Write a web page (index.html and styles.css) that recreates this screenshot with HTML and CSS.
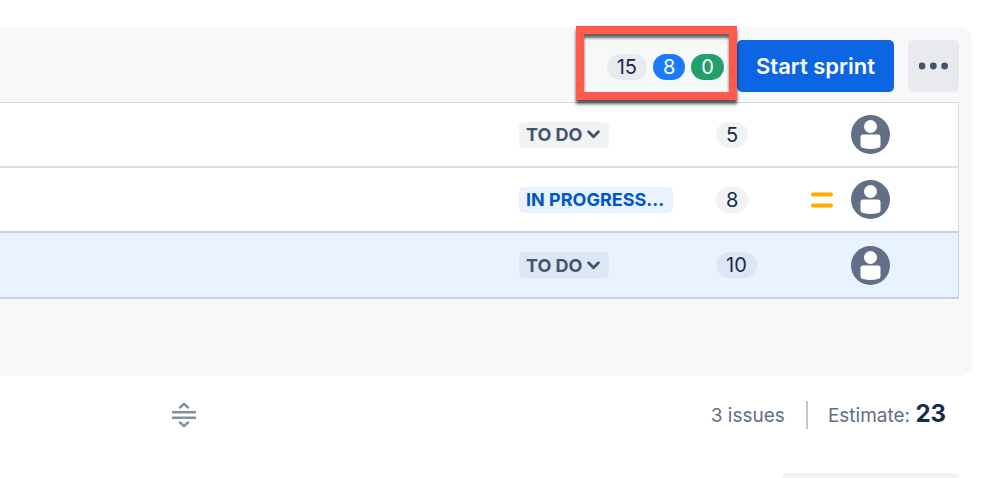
FILE: index.html
```html
<!DOCTYPE html>
<html lang="en">
<head>
<meta charset="utf-8">
<title>Sprint</title>
<link rel="stylesheet" href="styles.css">
</head>
<body>
<svg width="0" height="0" class="symbols" aria-hidden="true">
  <symbol id="person" viewBox="0 0 39 39">
    <circle cx="19.5" cy="19.5" r="19.5" fill="#626f86"/>
    <circle cx="19.5" cy="11.5" r="6.5" fill="#fff"/>
    <path d="M12 19.5h15a2.5 2.5 0 0 1 2.500 2.500v8.500q0 2-2.500 2.600q-7.500 1.800-15 0q-2.500-.6-2.500-2.600v-8.500a2.500 2.500 0 0 1 2.500-2.500z" fill="#fff"/>
  </symbol>
  <symbol id="chevron" viewBox="0 0 12 8">
    <path d="M1.500 1.500L6 6L10.500 1.500" fill="none" stroke="currentColor" stroke-width="2.600" stroke-linecap="round" stroke-linejoin="round"/>
  </symbol>
</svg>
<section class="panel">
  <header class="toolbar">
    <div class="totals">
      <span class="badge badge-neutral">15</span>
      <span class="badge badge-blue">8</span>
      <span class="badge badge-green">0</span>
      <div class="highlight"></div>
    </div>
    <button class="start" type="button">Start sprint</button>
    <button class="more" type="button" aria-label="More">
      <svg width="30" height="8" viewBox="0 0 30 8"><g fill="#44546f"><circle cx="3" cy="4" r="3.400"/><circle cx="14.300" cy="4" r="3.400"/><circle cx="25.600" cy="4" r="3.400"/></g></svg>
    </button>
  </header>
  <table class="issues">
    <colgroup><col><col class="col-status"><col class="col-points"><col class="col-priority"><col class="col-person"></colgroup>
    <tbody>
      <tr>
        <td></td>
        <td><button class="status" type="button">TO DO<svg width="13" height="9"><use href="#chevron"/></svg></button></td>
        <td><span class="badge points">5</span></td>
        <td></td>
        <td><svg class="person" width="39" height="39"><use href="#person"/></svg></td>
      </tr>
      <tr>
        <td></td>
        <td><button class="status status-progress" type="button">IN PROGRESS...</button></td>
        <td><span class="badge points">8</span></td>
        <td><svg class="priority" width="22" height="16" viewBox="0 0 22 16"><path d="M2 2.500H20M2 13.500H20" stroke="#ffab00" stroke-width="4" stroke-linecap="round"/></svg></td>
        <td><svg class="person" width="39" height="39"><use href="#person"/></svg></td>
      </tr>
      <tr class="selected">
        <td></td>
        <td><button class="status" type="button">TO DO<svg width="13" height="9"><use href="#chevron"/></svg></button></td>
        <td><span class="badge points">10</span></td>
        <td></td>
        <td><svg class="person" width="39" height="39"><use href="#person"/></svg></td>
      </tr>
    </tbody>
  </table>
</section>
<footer class="summary">
  <svg class="grip" width="24" height="26" viewBox="0 0 24 26" fill="none" stroke="#8590a2" stroke-width="2.500"><path d="M0 10.300H24M0 15.700H24"/><path d="M8 5.500L12 1.800L16 5.500M8 20.500L12 24.200L16 20.500" stroke-linecap="round" stroke-linejoin="round"/></svg>
  <span class="count">3 issues</span>
  <span class="estimate">Estimate: <strong>23</strong></span>
</footer>
<div class="next"></div>
</body>
</html>
```
FILE: styles.css
```css
* { box-sizing: border-box; }

html { overflow: hidden; }

body {
  margin: 0;
  padding-top: 27px;
  background: #fff;
  color: #172b4d;
  font-family: Inter, "Liberation Sans", sans-serif;
  font-size: 19px;
}

.symbols { position: absolute; }

button {
  border: 0;
  padding: 0;
  font: inherit;
  color: inherit;
}

.panel {
  margin-right: 26px;
  padding: 13px 13px 77px 0;
  border-radius: 0 13px 13px 0;
  background: #f7f8f9;
}

.toolbar {
  display: flex;
  justify-content: flex-end;
  align-items: center;
  padding-bottom: 10px;
}

.totals {
  position: relative;
  display: flex;
  gap: 6px;
  margin: 2px 13px 0 0;
}

.badge {
  display: inline-block;
  min-width: 32px;
  height: 26px;
  padding: 0 10px;
  border-radius: 13px;
  font-size: 20px;
  line-height: 26px;
  text-align: center;
  vertical-align: middle;
}

.badge-neutral { background: #e9eaee; }
.badge-blue { background: #1d7afc; color: #fff; }
.badge-green { background: #22a06b; color: #fff; }

.highlight {
  position: absolute;
  inset: -28px -13px -20px -31px;
  border: 8px solid #ff5a4c;
  box-shadow: 0 4px 3px rgba(0, 0, 0, .65), inset 0 4px 3px rgba(0, 0, 0, .6);
}

.start {
  height: 52px;
  padding: 0 19px;
  border-radius: 5px;
  background: #0c66e4;
  color: #fff;
  font-size: 22px;
  font-weight: 600;
}

.more {
  display: flex;
  align-items: center;
  justify-content: center;
  width: 51px;
  height: 52px;
  margin-left: 14px;
  border-radius: 5px;
  background: #e9eaed;
}

.issues {
  width: 100%;
  table-layout: fixed;
  border-collapse: separate;
  border-spacing: 0;
  border-top: 1px solid #d5d9e2;
  background: #fff;
}

.col-status { width: 197px; }
.col-points { width: 95px; }
.col-priority { width: 40px; }
.col-person { width: 108px; }

.issues td {
  height: 65px;
  padding: 0;
  border-bottom: 2px solid #dddfe8;
}

.issues td:last-child { border-right: 1px solid #d5d9e2; }

.issues tr:nth-child(2) td { border-bottom-color: #c7d1e5; }

.issues .selected td {
  height: 66px;
  border-color: #c7d1e5;
  background: #e9f2ff;
}

.status {
  display: flex;
  align-items: center;
  gap: 5px;
  height: 26px;
  padding: 0 9px 0 7px;
  border-radius: 5px;
  background: #f1f2f4;
  color: #44546f;
  font-size: 18px;
  font-weight: 700;
}

.status-progress { background: #e9f2ff; color: #0055cc; }
.points { background: #f1f2f4; }
.selected .status, .selected .points { background: #dde6f4; }
.person, .priority { display: block; }

.summary {
  display: flex;
  align-items: center;
  height: 78px;
  padding: 0 52px 0 172px;
  color: #626f86;
}

.count {
  margin-left: auto;
  padding-right: 21px;
}

.estimate {
  padding-left: 20px;
  border-left: 2px solid #c1c7d4;
  line-height: 26px;
}

.estimate strong {
  color: #172b4d;
  font-size: 24px;
}

.next {
  width: 177px;
  height: 52px;
  margin: 19px 39px 0 auto;
  border-radius: 5px;
  background: #f1f2f4;
}
```
